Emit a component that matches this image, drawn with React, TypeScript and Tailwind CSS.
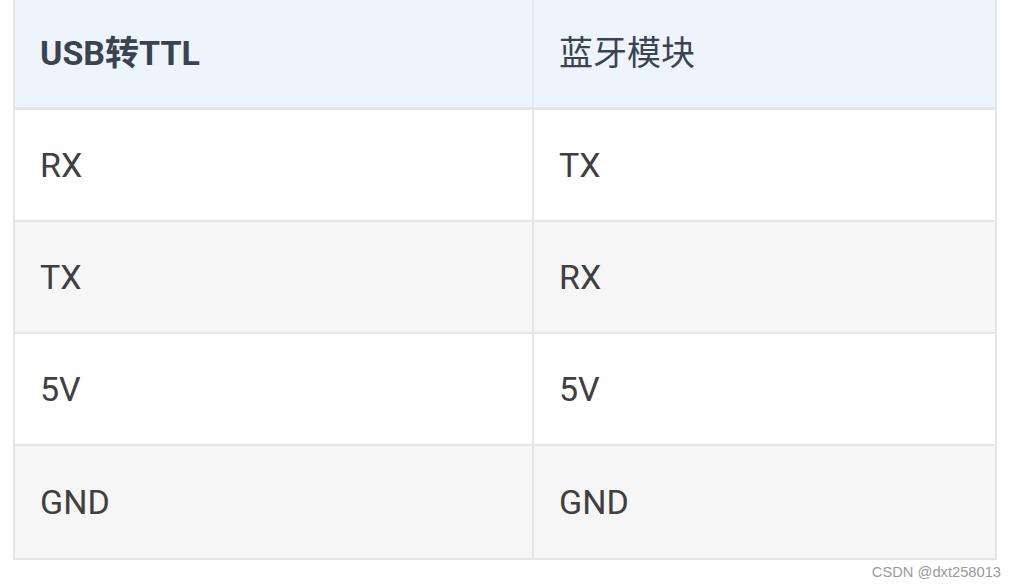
const rows = [
  ['RX', 'TX'],
  ['TX', 'RX'],
  ['5V', '5V'],
  ['GND', 'GND'],
]

export default function App() {
  return (
    <div
      className="relative h-[585px] w-[1016px] overflow-hidden bg-white"
      style={{ fontFamily: 'Roboto, "Noto Sans CJK SC", sans-serif' }}
    >
      <div className="ml-[13px] w-[984px] border-x-2 border-b-2 border-[#e6e6e6]">
        <div className="flex h-[110px] border-b-[3px] border-[#dfe6ee] bg-[#eef4fb]">
          <div className="flex w-[519px] items-center border-r-2 border-[#e2e8ef] pl-[25px] text-[34px] font-bold text-[#3b4350]">
            USB转TTL
          </div>
          <div className="flex flex-1 items-center pl-[25px] text-[34px] text-[#3b4350]">
            蓝牙模块
          </div>
        </div>
        {rows.map((r, i) => (
          <div
            key={i}
            className={
              'flex h-[112px] border-[#e6e6e6] text-[34px] text-[#404040] ' +
              (i % 2 ? 'bg-[#f6f6f6]' : 'bg-white') +
              (i < rows.length - 1 ? ' border-b-2' : '')
            }
          >
            <div className="flex w-[519px] items-center border-r-2 border-[#e6e6e6] pl-[25px]">{r[0]}</div>
            <div className="flex flex-1 items-center pl-[25px]">{r[1]}</div>
          </div>
        ))}
      </div>
      <div
        className="absolute right-[15px] top-[561px] text-[14.7px] text-[#9a9a9a]"
        style={{ fontFamily: '"Liberation Sans", sans-serif' }}
      >
        CSDN @dxt258013
      </div>
    </div>
  )
}
